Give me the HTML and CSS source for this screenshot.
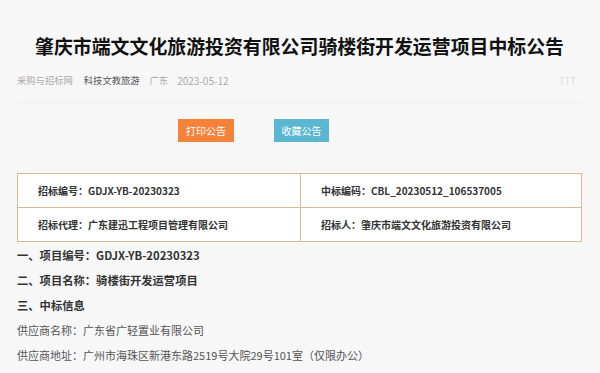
FILE: index.html
```html
<!DOCTYPE html>
<html lang="zh-CN">
<head>
    <meta charset="UTF-8">
    <meta name="viewport" content="width=device-width, initial-scale=1.0">
    <title>中标公告</title>
    <link rel="stylesheet" href="styles.css">
</head>
<body>
    <div class="page">
        <div class="header">
            <h1 class="title">肇庆市端文文化旅游投资有限公司骑楼街开发运营项目中标公告</h1>
            <div class="meta">
                <span class="meta-site">采购与招标网</span>
                <span class="meta-cat">科技文教旅游</span>
                <span class="meta-area">广东</span>
                <span class="meta-date">2023-05-12</span>
                <span class="meta-font">TIT</span>
            </div>
        </div>

        <div class="actions">
            <button class="btn btn-print">打印公告</button>
            <button class="btn btn-fav">收藏公告</button>
        </div>

        <div class="info-table">
            <div class="cell">招标编号：GDJX-YB-20230323</div>
            <div class="cell">中标编码：CBL_20230512_106537005</div>
            <div class="cell">招标代理：广东建迅工程项目管理有限公司</div>
            <div class="cell">招标人：肇庆市端文文化旅游投资有限公司</div>
        </div>

        <div class="content">
            <p class="strong">一、项目编号：GDJX-YB-20230323</p>
            <p class="strong">二、项目名称：骑楼街开发运营项目</p>
            <p class="strong">三、中标信息</p>
            <p>供应商名称：广东省广轻置业有限公司</p>
            <p>供应商地址：广州市海珠区新港东路2519号大院29号101室（仅限办公）</p>
        </div>
    </div>
</body>
</html>
```

FILE: styles.css
```css
* {
    margin: 0;
    padding: 0;
    box-sizing: border-box;
}

body {
    font-family: "Noto Sans CJK SC", "Noto Sans", sans-serif;
    background: #f7f7f7;
    color: #333;
}

.page {
    padding: 0 18px 0 17px;
}

.header {
    padding-top: 33px;
    border-bottom: 1px solid #efefef;
    padding-bottom: 15px;
}

.title {
    font-size: 18.9px;
    line-height: 26px;
    font-weight: bold;
    color: #111;
    text-align: center;
    white-space: nowrap;
}

.meta {
    display: flex;
    align-items: center;
    margin-top: 14px;
    height: 14px;
    font-size: 9.3px;
    color: #aaa;
}

.meta-cat {
    margin-left: 11px;
    color: #555;
}

.meta-area {
    margin-left: 10px;
}

.meta-date {
    margin-left: 9px;
    font-size: 10px;
}

.meta-font {
    margin-left: auto;
    margin-right: 5px;
    color: #ddd;
    font-size: 10px;
    letter-spacing: 1px;
}

.actions {
    display: flex;
    gap: 40px;
    padding-left: 161px;
    margin-top: 16px;
}

.btn {
    width: 56px;
    height: 23px;
    border: none;
    color: #fff;
    font-family: inherit;
    font-size: 10px;
}

.btn-print {
    background: #f5823a;
}

.btn-fav {
    width: 55px;
    background: #5bb6d2;
}

.info-table {
    display: grid;
    grid-template-columns: 283px 1fr;
    margin-top: 31px;
    border: 1px solid #d9b899;
    background: #fff;
}

.cell {
    height: 34px;
    line-height: 33px;
    padding-left: 20px;
    font-size: 10px;
    font-weight: bold;
    color: #333;
    border-bottom: 1px solid #d9b899;
}

.cell:nth-child(odd) {
    border-right: 1px solid #d9b899;
}

.cell:nth-last-child(-n+2) {
    border-bottom: none;
    height: 33px;
}

.content {
    margin-top: 1px;
}

.content p {
    line-height: 25px;
    font-size: 11px;
    color: #555;
}

.content .strong {
    font-weight: bold;
    font-size: 11.3px;
    color: #333;
}
```
